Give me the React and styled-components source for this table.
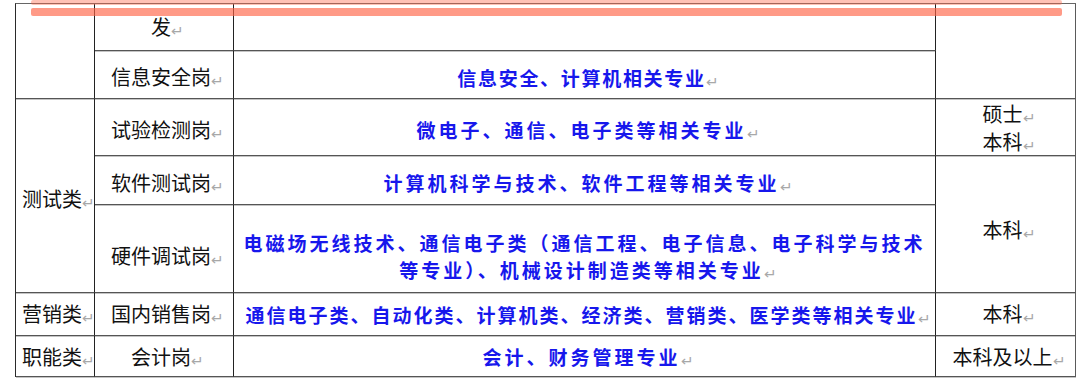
import styled, { createGlobalStyle } from "styled-components";

const GlobalStyle = createGlobalStyle`
  html, body {
    margin: 0;
    padding: 0;
    background: #ffffff;
  }
  body {
    font-family: "Noto Sans CJK SC", "Noto Sans", sans-serif;
  }
`;

const Page = styled.div`
  position: relative;
  width: 1080px;
  height: 383px;
  padding: 3px 0 0 15px;
  box-sizing: border-box;
  overflow: hidden;
`;

// highlighter strokes that lie over the top of the table
const Stripe = styled.div`
  position: absolute;
  left: 31px;
  width: 1031px;
  top: ${(p) => p.$top}px;
  height: ${(p) => p.$height}px;
  background: rgba(255, 100, 70, ${(p) => p.$alpha});
  border-radius: 2px;
  pointer-events: none;
`;

const Table = styled.div`
  display: grid;
  grid-template-columns: 79px 139px 702px 140px;
  grid-template-rows: 47px 48px 57px 49px 88px 43px 41px;
  border-left: 1px solid #2a2a2a;
  border-top: 1px solid #666;
  width: max-content;
`;

const Cell = styled.div`
  grid-column: ${(p) => p.$col};
  grid-row: ${(p) => p.$row};
  box-sizing: border-box;
  border-right: 1px solid ${(p) => (p.$light ? "#5a5a5a" : "#222")};
  border-bottom: 1px solid #555;
  box-shadow: 0 1px 0 #c4c4c4;
  display: flex;
  flex-direction: column;
  align-items: center;
  justify-content: center;
  padding-top: ${(p) => p.$dy ?? 5}px;
  text-align: center;
  white-space: nowrap;
`;

const Label = styled.div`
  font-size: 20px;
  line-height: 28px;
  color: #111;
  font-weight: 400;
`;

const Major = styled.div`
  font-size: 19px;
  line-height: 27px;
  color: #1717ec;
  font-weight: 700;
  letter-spacing: ${(p) => p.$sp ?? 3}px;
`;

// Word paragraph mark
const Mark = styled.span`
  display: inline-block;
  font-family: "DejaVu Sans", sans-serif;
  font-size: 19px;
  line-height: 1;
  font-weight: 400;
  letter-spacing: 0;
  color: #a8a8a8;
  width: 12px;
  margin-right: -6px;
  transform: scale(0.8, 0.75);
  transform-origin: left bottom;
`;

const T = ({ children }) => (
  <Label>
    {children}
    <Mark>↵</Mark>
  </Label>
);

const M = ({ children, sp }) => (
  <Major $sp={sp}>
    {children}
    <Mark>↵</Mark>
  </Major>
);

export default function App() {
  return (
    <>
      <GlobalStyle />
      <Page>
        <Table>
          <Cell $col="1" $row="1 / span 2" />
          <Cell $col="2" $row="1" $dy={0}>
            <T>发</T>
          </Cell>
          <Cell $col="3" $row="1" />
          <Cell $col="4" $row="1 / span 2" $light />

          <Cell $col="2" $row="2">
            <T>信息安全岗</T>
          </Cell>
          <Cell $col="3" $row="2">
            <M sp={1.7}>信息安全、计算机相关专业</M>
          </Cell>

          <Cell $col="1" $row="3 / span 3" $dy={6}>
            <T>测试类</T>
          </Cell>
          <Cell $col="2" $row="3">
            <T>试验检测岗</T>
          </Cell>
          <Cell $col="3" $row="3">
            <M>微电子、通信、电子类等相关专业</M>
          </Cell>
          <Cell $col="4" $row="3" $light $dy={2}>
            <T>硕士</T>
            <T>本科</T>
          </Cell>

          <Cell $col="2" $row="4">
            <T>软件测试岗</T>
          </Cell>
          <Cell $col="3" $row="4">
            <M>计算机科学与技术、软件工程等相关专业</M>
          </Cell>
          <Cell $col="4" $row="4 / span 2" $light $dy={11}>
            <T>本科</T>
          </Cell>

          <Cell $col="2" $row="5" $dy={14}>
            <T>硬件调试岗</T>
          </Cell>
          <Cell $col="3" $row="5" $dy={14}>
            <Major>电磁场无线技术、通信电子类（通信工程、电子信息、电子科学与技术</Major>
            <M>等专业）、机械设计制造类等相关专业</M>
          </Cell>

          <Cell $col="1" $row="6" $dy={0}>
            <T>营销类</T>
          </Cell>
          <Cell $col="2" $row="6" $dy={0}>
            <T>国内销售岗</T>
          </Cell>
          <Cell $col="3" $row="6" $dy={0}>
            <M sp={2}>通信电子类、自动化类、计算机类、经济类、营销类、医学类等相关专业</M>
          </Cell>
          <Cell $col="4" $row="6" $light $dy={0}>
            <T>本科</T>
          </Cell>

          <Cell $col="1" $row="7" $dy={1}>
            <T>职能类</T>
          </Cell>
          <Cell $col="2" $row="7" $dy={1}>
            <T>会计岗</T>
          </Cell>
          <Cell $col="3" $row="7" $dy={1}>
            <M>会计、财务管理专业</M>
          </Cell>
          <Cell $col="4" $row="7" $light $dy={1}>
            <T>本科及以上</T>
          </Cell>
        </Table>
        <Stripe $top={0} $height={5} $alpha={0.4} />
        <Stripe $top={8} $height={8} $alpha={0.65} />
      </Page>
    </>
  );
}
